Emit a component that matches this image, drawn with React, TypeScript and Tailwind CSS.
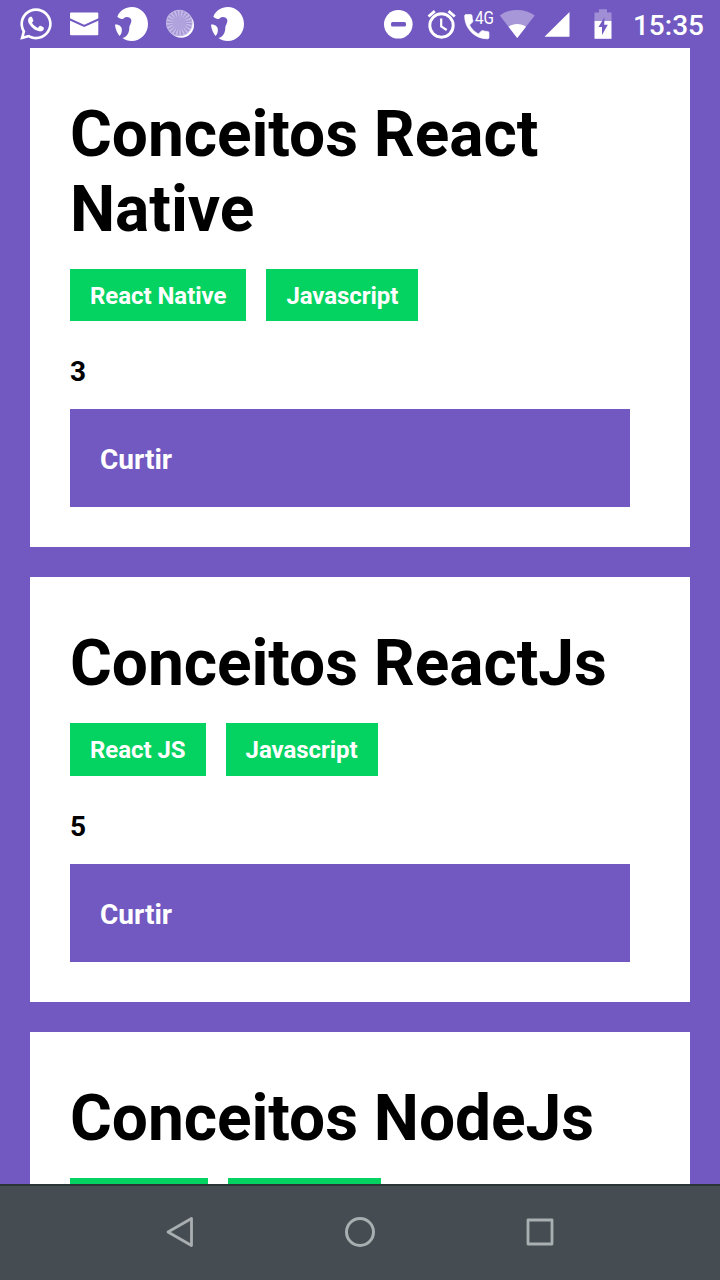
import React from "react";
import { FaWhatsapp } from "react-icons/fa";

const PHONE =
  "M6.62 10.79c1.44 2.83 3.76 5.14 6.59 6.59l2.2-2.2c.27-.27.67-.36 1.02-.24 1.12.37 2.33.57 3.57.57.55 0 1 .45 1 1V20c0 .55-.45 1-1 1-9.39 0-17-7.61-17-17 0-.55.45-1 1-1h3.5c.55 0 1 .45 1 1 0 1.25.2 2.45.57 3.57.11.35.03.74-.25 1.02l-2.2 2.2z";

function BirdIcon({ className }: { className: string }) {
  return (
    <svg className={className} viewBox="110 0 44 48" fill="#fff">
      <path d="M117.300 16.500C120 10.500 125.500 7 131.500 7C141 7 148 14.600 148 24C148 33.400 141 41 131.500 41C128 41 125 39.800 122.500 38C127 37 129.500 32.500 129.300 27.500C129.200 25.500 131.300 24 131.400 20.500C131.300 17.500 127 15.800 124.300 17.800C122.500 20.300 119 18.500 117.300 16.500Z" />
      <path d="M115 24.500C117.500 24 121.300 25.500 121.800 28.800C122.200 32 121 35 119.500 36C117 33 115.300 29 115 24.500Z" />
    </svg>
  );
}

function StatusBar() {
  return (
    <div className="flex h-12 w-full shrink-0 items-center bg-[#7159c1]">
      <FaWhatsapp className="ml-[20px] h-[36px] w-[32px] shrink-0 text-white" />
      <svg className="ml-[14px] h-12 w-[36px] shrink-0" viewBox="66 0 36 48">
        <rect x="70" y="12.500" width="28.300" height="22.800" rx="1" fill="#fff" />
        <path d="M69 19L84.200 25.800L99.500 19" fill="none" stroke="#7159c1" strokeWidth="2" />
      </svg>
      <BirdIcon className="ml-[8px] h-12 w-[44px] shrink-0" />
      <svg className="ml-[4px] h-12 w-[44px] shrink-0" viewBox="158 0 44 48">
        <circle cx="181.200" cy="25" r="12.800" fill="#fff" />
        <circle cx="179.300" cy="23" r="13.300" fill="#c4b9e6" />
        <circle cx="179.300" cy="23" r="9.500" fill="none" stroke="#a394d6" strokeWidth="6" strokeDasharray="1.300 1.684" />
        <circle cx="179.300" cy="23" r="7" fill="#b0a2dc" />
      </svg>
      <BirdIcon className="ml-[4px] h-12 w-[44px] shrink-0" />
      <div className="grow" />
      <svg className="h-12 w-[200px] shrink-0" viewBox="380 0 200 48">
        <circle cx="398.300" cy="24.300" r="14.300" fill="#fff" />
        <rect x="391" y="22" width="15" height="4.600" rx="1.500" fill="#7159c1" />
        <g fill="none" stroke="#fff">
          <circle cx="441.500" cy="25.500" r="11.700" strokeWidth="2.900" />
          <path d="M441.200 18.500V26.500L446.700 30" strokeWidth="2.200" />
          <path d="M428.500 16.500L434.800 11.200M454.800 16.500L448.500 11.200" strokeWidth="2.900" />
        </g>
        <g transform="translate(460.600 10.500) scale(1.350)">
          <path d={PHONE} fill="#fff" stroke="#fff" strokeWidth="0.500" />
        </g>
        <text x="475" y="24" fill="#fff" fontFamily="Roboto, sans-serif" fontSize="18" textLength="19" lengthAdjust="spacingAndGlyphs">4G</text>
        <path d="M517.200 38L499.800 15.500C509 8 525.500 8 534.700 15.500Z" fill="#a797d9" />
        <path d="M517.200 38L508.500 26.800C513.500 23 521 23 526 26.800Z" fill="#fff" />
        <path d="M544.500 36.800L569.500 12V36.800Z" fill="#fff" />
      </svg>
      <svg className="h-12 w-[44px] shrink-0" viewBox="580 0 44 48">
        <path d="M594.500 21V12.500H599V9.300H607V12.500H611.500V21Z" fill="#a08fd5" />
        <rect x="594.500" y="21" width="17" height="17.800" fill="#fff" />
        <path d="M604.500 17L598.500 27H602V35L607.800 24.800H604.200Z" fill="#7159c1" />
      </svg>
      <span className="ml-[9px] mr-[16px] mt-[4px] text-[28px] font-medium leading-none text-white">15:35</span>
    </div>
  );
}

function Title({ children }: { children: string }) {
  return <h1 className="text-[64px] font-bold leading-[75px] tracking-[-0.06px] text-black">{children}</h1>;
}

function Card({ title, techs, likes }: { title: string; techs: string[]; likes: number }) {
  return (
    <section className="mb-[30px] shrink-0 bg-white px-10 pb-10 pt-[49px]">
      <Title>{title}</Title>
      <div className="mt-[22px] flex gap-5">
        {techs.map((tech) => (
          <span
            key={tech}
            className="h-[52.4px] bg-[#04d361] px-5 py-[10px] text-[24px] font-bold leading-[34px] tracking-[-0.05px] text-white"
          >
            {tech}
          </span>
        ))}
      </div>
      <p className="mt-[34px] text-[28px] font-bold leading-[33px] text-black">{likes}</p>
      <button className="mt-[21px] block h-[98px] w-[560px] bg-[#7159c1] px-[30px] pt-[4px] text-left text-[28px] font-bold text-white">
        Curtir
      </button>
    </section>
  );
}

export default function App() {
  return (
    <div className="flex h-[1280px] w-[720px] flex-col overflow-hidden bg-[#7159c1] font-['Roboto',sans-serif]">
      <StatusBar />
      <main className="flex min-h-0 grow flex-col overflow-hidden px-[30px]">
        <Card title="Conceitos React Native" techs={["React Native", "Javascript"]} likes={3} />
        <Card title="Conceitos ReactJs" techs={["React JS", "Javascript"]} likes={5} />
        <section className="grow bg-white px-10 pt-[49px]">
          <Title>Conceitos NodeJs</Title>
          <div className="mt-[22px] flex gap-5">
            <span className="h-[7px] w-[138px] bg-[#04d361]" />
            <span className="h-[7px] w-[153px] bg-[#04d361]" />
          </div>
        </section>
      </main>
      <nav className="flex h-24 shrink-0 items-center justify-center gap-[136px] border-t-2 border-[#2b3537] bg-[#454d52]">
        <svg className="h-11 w-11" viewBox="0 0 44 44" fill="none" stroke="#a9aeb1" strokeWidth="2.800" strokeLinejoin="round">
          <path d="M10 21L33.500 7.500V34.500Z" />
        </svg>
        <svg className="h-11 w-11" viewBox="0 0 44 44" fill="none" stroke="#a9aeb1" strokeWidth="3">
          <circle cx="22" cy="21" r="13.500" />
        </svg>
        <svg className="h-11 w-11" viewBox="0 0 44 44" fill="none" stroke="#a9aeb1" strokeWidth="2.800" strokeLinejoin="round">
          <rect x="10" y="9" width="24" height="24" />
        </svg>
      </nav>
    </div>
  );
}
